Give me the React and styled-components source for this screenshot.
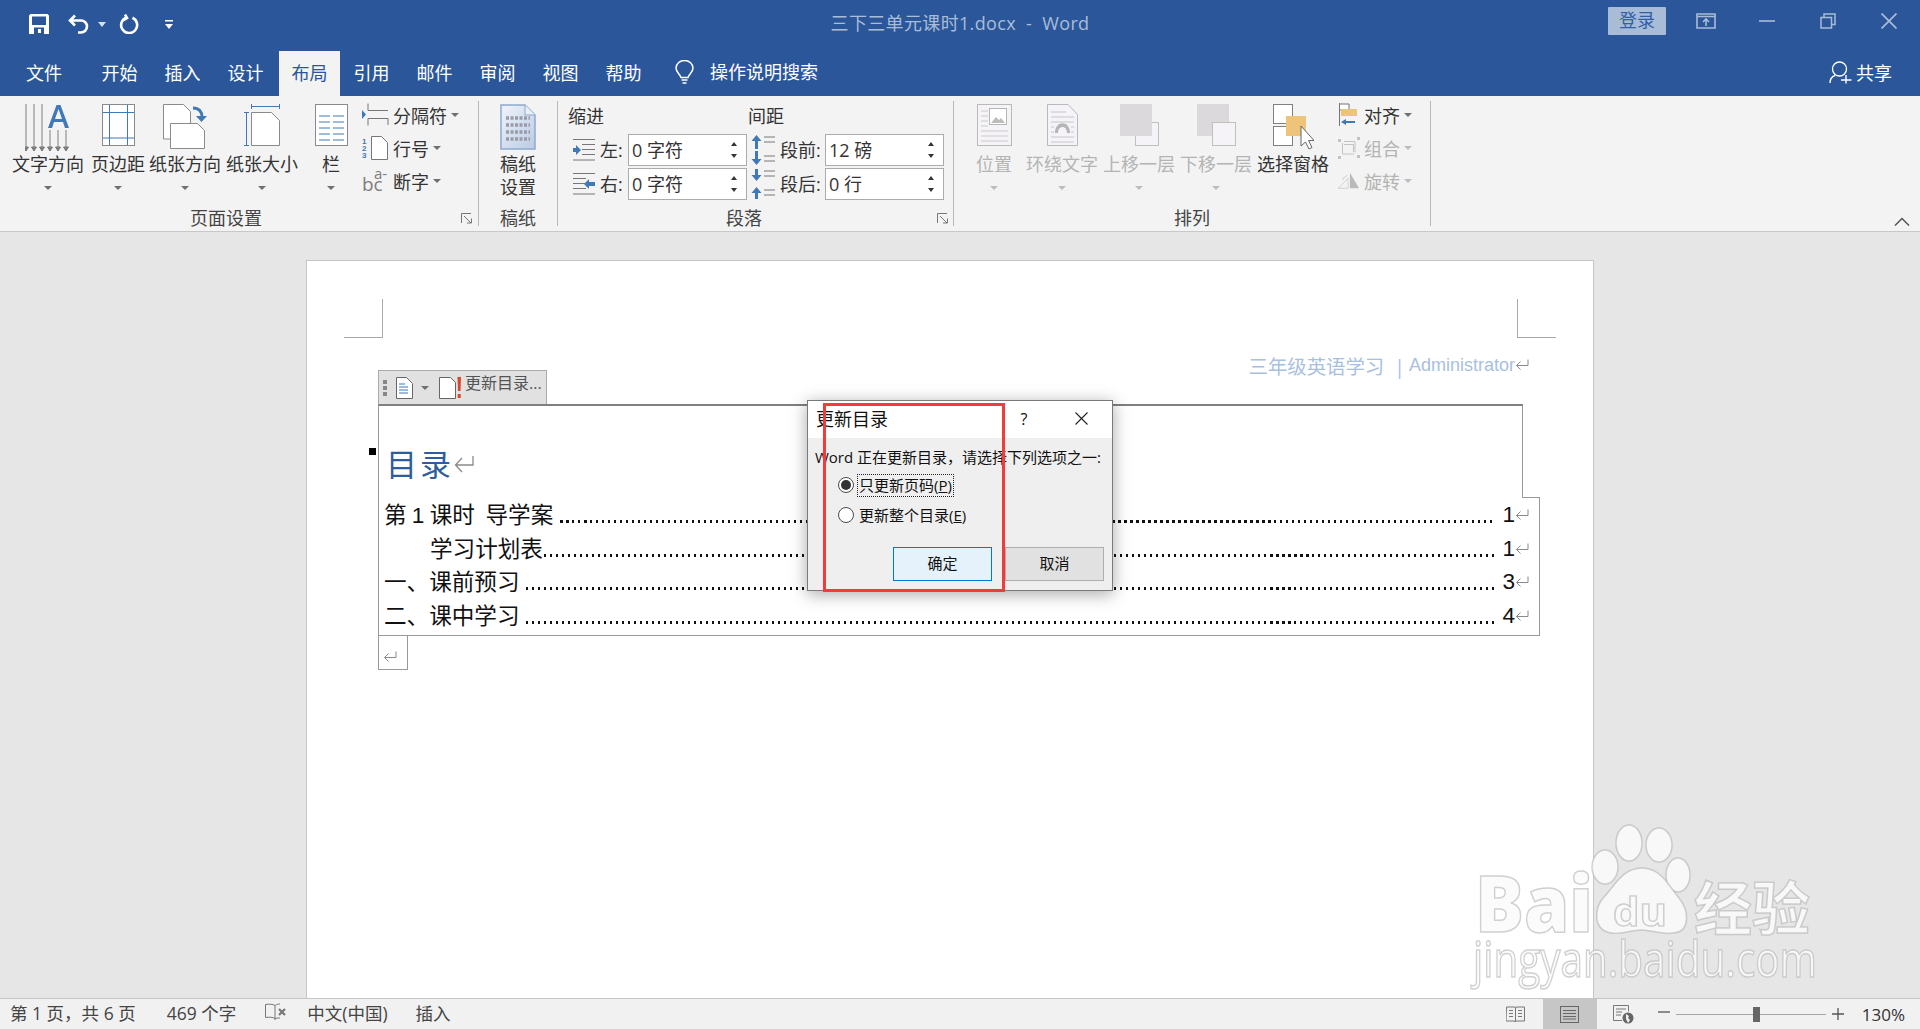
import styled, { createGlobalStyle } from "styled-components";

const UI_FONT = `"Open Sans", "Noto Sans CJK SC", sans-serif`;
const DOC_FONT = `"Liberation Sans", "Noto Sans CJK SC", sans-serif`;
const BLUE = "#4178b8";

const Global = createGlobalStyle`
  html, body { margin: 0; padding: 0; background: #e6e6e6; }
  * { box-sizing: border-box; }
`;

const Root = styled.div`
  position: relative;
  width: 100%;
  height: 100vh;
  overflow: hidden;
  display: flex;
  flex-direction: column;
  font-family: ${UI_FONT};
  font-size: 18px;
  color: #333;
`;

/* title bar */
const TitleBar = styled.div`
  height: 48px;
  flex: none;
  background: #2b579a;
  display: grid;
  grid-template-columns: 1fr auto 1fr;
  align-items: center;
`;
const Qat = styled.div`
  display: flex;
  align-items: center;
  padding-left: 29px;
`;
const QatItem = styled.span`
  display: flex;
  margin-left: ${(p) => p.$ml || 0}px;
`;
const DocTitle = styled.div`
  color: #a9bcd8;
  font-size: 18px;
  line-height: 24px;
  letter-spacing: 0.35px;
  white-space: pre;
  margin-top: -2px;
`;
const WinControls = styled.div`
  display: flex;
  align-items: center;
  justify-content: flex-end;
  padding-right: 1px;
`;
const SignIn = styled.div`
  width: 58px;
  height: 28px;
  margin-right: 9px;
  margin-top: -6px;
  background: #a9bcd7;
  border-radius: 1px;
  color: #2f5fa5;
  font-size: 18px;
  line-height: 27px;
  text-align: center;
`;
const WinBtn = styled.div`
  width: 61px;
  height: 42px;
  margin-top: -6px;
  display: flex;
  align-items: center;
  justify-content: center;
`;

/* tabs */
const TabBar = styled.div`
  height: 48px;
  flex: none;
  background: #2b579a;
  display: flex;
  align-items: flex-end;
`;
const Tab = styled.div`
  width: ${(p) => (p.$active ? 61 : p.$w || 63)}px;
  margin-left: ${(p) => (p.$active ? 2 : 0)}px;
  height: 45px;
  line-height: 44px;
  text-align: center;
  font-size: 18px;
  color: ${(p) => (p.$active ? "#2b579a" : "#fff")};
  background: ${(p) => (p.$active ? "#f3f3f3" : "transparent")};
`;
const SearchBox = styled.div`
  display: flex;
  align-items: center;
  gap: 16px;
  height: 48px;
  margin-left: 20px;
  color: #fff;
  font-size: 18px;
  line-height: 46px;
`;
const Share = styled.div`
  display: flex;
  align-items: center;
  gap: 4px;
  height: 48px;
  margin-left: auto;
  padding-right: 28px;
  color: #fff;
  font-size: 18px;
`;

/* ribbon */
const Ribbon = styled.div`
  height: 136px;
  flex: none;
  position: relative;
  background: #f3f3f3;
  border-bottom: 1px solid #c8c8c8;
  display: flex;
  align-items: flex-start;
`;
const Group = styled.div`
  position: relative;
  width: ${(p) => p.$w}px;
  height: 125px;
  margin-top: 5px;
  border-right: 1px solid #b9b9b9;
  display: flex;
  flex-direction: column;
`;
const GroupBody = styled.div`
  height: 104px;
  flex: none;
  padding: 3px 0 0 ${(p) => p.$pl || 0}px;
  display: flex;
  align-items: flex-start;
`;
const GroupLabel = styled.div`
  height: 21px;
  line-height: 26px;
  text-align: center;
  padding-right: ${(p) => p.$pr || 0}px;
  font-size: 18px;
  color: #444;
`;
const Launcher = styled.span`
  position: absolute;
  right: ${(p) => p.$right}px;
  bottom: 2px;
  display: flex;
`;
const LargeBtn = styled.div`
  width: ${(p) => p.$w}px;
  flex: none;
  display: flex;
  flex-direction: column;
  align-items: center;
  color: ${(p) => (p.$off ? "#b4b4b4" : "#333")};
`;
const IconSlot = styled.div`
  height: 49px;
  display: flex;
  align-items: flex-start;
  justify-content: center;
`;
const BtnLine = styled.div`
  height: 23px;
  line-height: 23px;
  font-size: 18px;
  white-space: nowrap;
  display: flex;
  align-items: center;
`;
const Caret = styled.span`
  width: 0;
  height: 0;
  flex: none;
  border-left: 4px solid transparent;
  border-right: 4px solid transparent;
  border-top: 4px solid ${(p) => (p.$off ? "#bdbdbd" : "#707070")};
`;
const SmallCol = styled.div`
  margin-left: ${(p) => p.$ml || 0}px;
  margin-top: -6px;
  display: flex;
  flex-direction: column;
`;
const SmallRow = styled.div`
  height: 33px;
  display: flex;
  align-items: center;
  font-size: 18px;
  color: ${(p) => (p.$off ? "#b4b4b4" : "#333")};
  white-space: nowrap;
`;
const SmallIcon = styled.span`
  width: ${(p) => p.$w}px;
  margin-right: 4px;
  display: flex;
  align-items: center;
  justify-content: center;
`;
const SmallCaret = styled(Caret)`
  margin-left: 4px;
`;
const ParaCol = styled.div`
  width: ${(p) => p.$w}px;
  flex: none;
  display: flex;
  flex-direction: column;
`;
const ParaHead = styled.div`
  height: 24px;
  line-height: 24px;
  margin-bottom: 6px;
  color: #333;
`;
const ParaRow = styled.div`
  height: 32px;
  margin-bottom: 2px;
  display: flex;
  align-items: center;
  white-space: nowrap;
`;
const ParaIcon = styled.span`
  width: ${(p) => p.$w}px;
  margin-left: ${(p) => p.$ml}px;
  display: flex;
`;
const ParaLabel = styled.span`
  width: ${(p) => p.$w}px;
  margin: -2px ${(p) => p.$mr}px 0 5px;
  color: #333;
`;
const SpinBox = styled.div`
  width: 119px;
  height: 32px;
  background: #fff;
  border: 1px solid #ababab;
  padding-left: 3px;
  display: flex;
  align-items: center;
  color: #333;
  line-height: 30px;
`;
const SpinArrows = styled.span`
  margin-left: auto;
  width: 24px;
  height: 100%;
  padding: 7px 0;
  display: flex;
  flex-direction: column;
  align-items: center;
  justify-content: space-between;
`;
const ArrowUp = styled.i`
  border-left: 3px solid transparent;
  border-right: 3px solid transparent;
  border-bottom: 4px solid #333;
`;
const ArrowDown = styled.i`
  border-left: 3px solid transparent;
  border-right: 3px solid transparent;
  border-top: 4px solid #333;
`;
const Collapse = styled.span`
  position: absolute;
  right: 10px;
  top: 121px;
  display: flex;
`;

/* document */
const Workspace = styled.div`
  flex: 1;
  min-height: 0;
  padding: 28px 0 0 306px;
  background: #e6e6e6;
  overflow: hidden;
`;
const Page = styled.div`
  width: 1288px;
  height: 900px;
  background: #fff;
  border: 1px solid #c6c6c6;
  padding-top: 38px;
`;
const CropRow = styled.div`
  display: flex;
  justify-content: space-between;
  margin: 0 37px;
`;
const CropMark = styled.div`
  width: 39px;
  height: 39px;
  border-bottom: 1px solid #a9a9a9;
  ${(p) => (p.$right ? "border-left" : "border-right")}: 1px solid #a9a9a9;
`;
const HeaderRow = styled.div`
  width: 1151px;
  height: 50px;
  margin: 16px 0 0 71px;
  display: flex;
  justify-content: space-between;
`;
const TocTab = styled.div`
  align-self: flex-end;
  width: 169px;
  height: 34px;
  background: #e1e1e1;
  border: 1px solid #aaa;
  border-bottom: none;
  display: flex;
  align-items: center;
  padding-left: 4px;
  color: #555;
  font-size: 16px;
  white-space: nowrap;
`;
const Grip = styled.span`
  width: 4px;
  height: 16px;
  margin-right: 9px;
  background: repeating-linear-gradient(#888 0 4px, transparent 4px 6px);
`;
const TabIcon = styled.span`
  display: flex;
  margin: 0 ${(p) => p.$mr || 0}px 0 ${(p) => p.$ml || 0}px;
`;
const TabText = styled.span`
  margin-top: -10px;
  line-height: 22px;
`;
const RunningHead = styled.div`
  display: flex;
  align-items: center;
  height: 22px;
  color: #a8c0e0;
  font-size: 19.4px;
  white-space: pre;
`;
const HeadLatin = styled.span`
  font-family: "Liberation Sans", sans-serif;
  font-size: 18px;
  margin-left: 4px;
`;
const TocWrap = styled.div`
  margin-left: 71px;
  width: 1162px;
  font-family: ${DOC_FONT};
  color: #111;
`;
const TocHead = styled.div`
  position: relative;
  width: 1145px;
  height: 94px;
  padding: 37px 0 0 7px;
  border-top: 2px solid #808080;
  border-left: 1px solid #999;
  border-right: 1px solid #999;
  display: flex;
  align-items: flex-start;
`;
const Anchor = styled.span`
  position: absolute;
  left: -10px;
  top: 42px;
  width: 7px;
  height: 7px;
  background: #000;
`;
const TocTitle = styled.span`
  color: #2e5d9a;
  font-size: 31px;
  line-height: 40px;
  letter-spacing: 3px;
  font-family: "Noto Sans CJK SC", sans-serif;
`;
const TitleReturn = styled.span`
  display: flex;
  margin-top: 12px;
`;
const TocBody = styled.div`
  position: relative;
  height: 138px;
  padding: 0 10px 0 5px;
  border-left: 1px solid #999;
  border-right: 1px solid #999;
  border-bottom: 1px solid #999;
  &::before {
    content: "";
    position: absolute;
    top: -1px;
    left: 1143px;
    width: 18px;
    border-top: 1px solid #999;
  }
`;
const TocLine = styled.div`
  height: 33.8px;
  display: flex;
  align-items: center;
  font-size: 22.6px;
  white-space: pre;
`;
const TocLabel = styled.span`
  padding-left: ${(p) => p.$indent || 0}px;
  margin-top: -3px;
  word-spacing: -1px;
`;
const Leader = styled.span`
  flex: 1;
  height: 3px;
  margin: 13px 6px 0 1px;
  background: repeating-linear-gradient(90deg, #111 0 2.5px, transparent 2.5px 6px);
`;
const TocTail = styled.div`
  width: 30px;
  height: 34px;
  padding: 11px 0 0 4px;
  border-left: 1px solid #999;
  border-right: 1px solid #999;
  border-bottom: 1px solid #999;
`;

/* dialog */
const Dialog = styled.div`
  position: absolute;
  left: 807px;
  top: 400px;
  width: 306px;
  height: 191px;
  background: #efefef;
  border: 1px solid #7a7a7a;
  box-shadow: 0 3px 16px rgba(0, 0, 0, 0.35);
  color: #111;
  font-size: 15px;
`;
const DialogTitle = styled.div`
  height: 37px;
  background: #fff;
  display: flex;
  align-items: center;
  padding: 0 0 2px 8px;
  font-size: 18px;
  line-height: 24px;
`;
const HelpMark = styled.span`
  margin-left: auto;
  width: 24px;
  text-align: center;
  font-size: 16px;
`;
const DialogClose = styled.span`
  width: 34px;
  margin: 0 14px 0 28px;
  display: flex;
  justify-content: center;
`;
const DialogMsg = styled.div`
  margin: 9px 0 3px 7px;
  line-height: 20px;
  white-space: nowrap;
`;
const RadioRow = styled.div`
  height: 30px;
  margin-left: 30px;
  display: flex;
  align-items: center;
`;
const RadioDot = styled.span`
  width: 16px;
  height: 16px;
  flex: none;
  border-radius: 50%;
  background: #fff;
  border: 1px solid #4a4a4a;
  display: flex;
  align-items: center;
  justify-content: center;
  &::after {
    content: "";
    width: 10px;
    height: 10px;
    border-radius: 50%;
    background: ${(p) => (p.$on ? "#333" : "transparent")};
  }
`;
const RadioLabel = styled.span`
  margin-left: 3px;
  height: 23px;
  line-height: 21px;
  padding: 0 1px;
  border: 1px dotted ${(p) => (p.$focus ? "#222" : "transparent")};
  white-space: nowrap;
`;
const DialogActions = styled.div`
  margin-top: 17px;
  padding-right: 8px;
  display: flex;
  justify-content: flex-end;
  gap: 13px;
`;
const DialogBtn = styled.div`
  width: 99px;
  height: 34px;
  line-height: 30px;
  text-align: center;
  font-size: 15px;
  background: ${(p) => (p.$primary ? "#e5f1fb" : "#e1e1e1")};
  border: 1px solid ${(p) => (p.$primary ? "#0078d7" : "#adadad")};
`;
const Highlight = styled.div`
  position: absolute;
  left: 823px;
  top: 403px;
  width: 182px;
  height: 189px;
  border: 3px solid #f33b3b;
`;

/* watermark */
const Watermark = styled.svg`
  position: absolute;
  left: 1465px;
  top: 820px;
  pointer-events: none;
  fill: rgba(250, 250, 250, 0.85);
  stroke: rgba(178, 178, 178, 0.6);
  stroke-width: 1.5px;
  filter: blur(0.5px);
`;

/* status bar */
const StatusBar = styled.div`
  height: 31px;
  flex: none;
  background: #f1f1f1;
  border-top: 1px solid #c6c6c6;
  display: flex;
  align-items: stretch;
  padding-left: 10px;
  color: #444;
  font-size: 17.5px;
`;
const StatusItem = styled.span`
  display: flex;
  align-items: center;
  margin: -4px 0 0 ${(p) => p.$ml || 0}px;
  white-space: pre;
`;
const StatusRight = styled.div`
  margin-left: auto;
  display: flex;
  align-items: center;
  padding-right: 15px;
`;
const ViewBtn = styled.span`
  width: 54px;
  align-self: stretch;
  display: flex;
  align-items: center;
  justify-content: center;
  background: ${(p) => (p.$active ? "#c6c6c6" : "transparent")};
`;
const ZoomSlider = styled.div`
  position: relative;
  width: 150px;
  height: 1px;
  margin: 0 6px;
  background: #a6a6a6;
`;
const ZoomThumb = styled.span`
  position: absolute;
  left: 77px;
  top: -7px;
  width: 7px;
  height: 15px;
  background: #666;
`;
const ZoomText = styled.span`
  margin-left: 18px;
  color: #333;
  font-size: 17px;
`;

/* icons */
const Svg = ({ w, h, children }) => (
  <svg width={w} height={h} viewBox={`0 0 ${w} ${h}`} fill="none">
    {children}
  </svg>
);

const SaveIcon = () => (
  <Svg w={20} h={20}>
    <path fillRule="evenodd" d="M0 1.500 1.500 0h17L20 1.500V20H0zM3 2.500v8.500h14V2.500zM5 13.500V20h10v-6.500zM9 15h3v4H9z" fill="#fff" />
  </Svg>
);
const UndoIcon = () => (
  <Svg w={23} h={20}>
    <path d="M3 6.500h11a6 6 0 0 1 0 12h-3M8 1.500 3 6.500l5 5" stroke="#fff" strokeWidth="2.600" />
  </Svg>
);
const RedoIcon = () => (
  <Svg w={20} h={20}>
    <path d="M7.500 3.500a8 8 0 1 0 6 .3M6 .5l2 3.500-3.500 2" stroke="#fff" strokeWidth="2.600" />
  </Svg>
);
const WhiteCaret = () => (
  <Svg w={8} h={5}>
    <path d="M0 0h8L4 5z" fill="#d5deec" />
  </Svg>
);
const CustomizeIcon = () => (
  <Svg w={8} h={9}>
    <path d="M0 0h8v1.500H0zM0 4h8L4 9z" fill="#fff" />
  </Svg>
);
const RibbonDisplayIcon = () => (
  <Svg w={20} h={16}>
    <path d="M1 1h18v14H1zM1 3.500h18M10 13V6.500M7 9l3-3 3 3" stroke="#a9bcd7" strokeWidth="1.600" />
  </Svg>
);
const MinIcon = () => (
  <Svg w={16} h={2}>
    <path d="M0 1h16" stroke="#a9bcd7" strokeWidth="1.600" />
  </Svg>
);
const RestoreIcon = () => (
  <Svg w={16} h={16}>
    <path d="M1 4.500h10.500V15H1zM4 4V1h11v10.500h-3.500" stroke="#a9bcd7" strokeWidth="1.500" />
  </Svg>
);
const CloseIcon = ({ size = 16, color = "#a9bcd7", sw = 1.7 }) => (
  <Svg w={size} h={size}>
    <path d={`M.5.5l${size - 1} ${size - 1}M${size - 0.5}.5l-${size - 1} ${size - 1}`} stroke={color} strokeWidth={sw} />
  </Svg>
);
const BulbIcon = () => (
  <Svg w={19} h={25}>
    <path d="M6 17.500C5 14 1 12.500 1 8a8.500 7.500 0 0 1 17 0c0 4.500-4 6-5 9.500zM6.500 20h6M7.500 23h4" stroke="#fff" strokeWidth="1.500" />
  </Svg>
);
const PersonPlusIcon = () => (
  <Svg w={23} h={23}>
    <circle cx="10.500" cy="8" r="7" stroke="#fff" strokeWidth="1.300" />
    <path d="M1 22c0-4 2-6.500 5-7.500M12 19h10.500M17 14v8.500" stroke="#fff" strokeWidth="1.400" />
  </Svg>
);
const TextDirIcon = () => (
  <Svg w={46} h={49}>
    {[1, 9, 17].map((x) => (
      <path key={x} d={`M${x} 0v47M${x - 2.5} 43l2.500 4 2.500-4z`} stroke="#7d7d7d" fill="#7d7d7d" strokeWidth="1" />
    ))}
    {[25, 33, 41].map((x) => (
      <path key={x} d={`M${x} 26v21M${x - 2.5} 43l2.500 4 2.500-4z`} stroke="#7d7d7d" fill="#7d7d7d" strokeWidth="1" />
    ))}
    <path d="M23 24 31.500 1h4L44 24h-4l-2-6h-9l-2 6zM30 15h7l-3.500-10z" fill={BLUE} fillRule="evenodd" />
  </Svg>
);
const MarginsIcon = () => (
  <Svg w={33} h={42}>
    <rect x=".5" y=".5" width="32" height="41" fill="#fff" stroke="#8a8a8a" />
    <path d="M7.500 1v40M25.500 1v40M1 8.500h31M1 34h31" stroke={BLUE} />
  </Svg>
);
const OrientIcon = () => (
  <Svg w={44} h={46}>
    <path d="M.5.500h20l7 7V35H.5z" fill="#fff" stroke="#8a8a8a" />
    <path d="M7.500 19.500h27l7 7v18h-34z" fill="#fff" stroke="#8a8a8a" />
    <path d="M30 4c6 0 9 4 9 9" stroke={BLUE} strokeWidth="3" />
    <path d="M33 12h11l-5.500 6z" fill={BLUE} />
  </Svg>
);
const SizeIcon = () => (
  <Svg w={36} h={42}>
    <path d="M7.500 8.500h20l8 8v25h-28z" fill="#fff" stroke="#8a8a8a" />
    <path d="M7.500 0v5M35.500 0v5M7.500 2.500h28M0 8.500h5M0 41.500h5M2.500 8.500v33" stroke={BLUE} />
  </Svg>
);
const ColumnsIcon = () => (
  <Svg w={33} h={42}>
    <rect x=".5" y=".5" width="32" height="41" fill="#fff" stroke="#8a8a8a" />
    {[12, 18, 24, 30, 36].map((y) => (
      <path key={y} d={`M4 ${y}h11M18 ${y}h11`} stroke={BLUE} />
    ))}
  </Svg>
);
const BreakIcon = () => (
  <Svg w={27} h={23}>
    <path d="M6 .5v7h20M6 22.500v-7h20V22" stroke="#777" />
    <path d="M0 7l4 4.500L0 16z" fill={BLUE} />
  </Svg>
);
const LineNumIcon = () => (
  <Svg w={27} h={24}>
    <text x="0" y="8" fontSize="8" fontWeight="700" fill={BLUE} fontFamily="Liberation Sans">1</text>
    <text x="0" y="15" fontSize="8" fontWeight="700" fill={BLUE} fontFamily="Liberation Sans">2</text>
    <text x="0" y="22" fontSize="8" fontWeight="700" fill={BLUE} fontFamily="Liberation Sans">3</text>
    <path d="M9.500.5h10l6 6v17h-16z" fill="#fff" stroke="#777" />
  </Svg>
);
const HyphenIcon = () => (
  <Svg w={27} h={33}>
    <text x="0" y="27" fontSize="19" fill="#7d7d7d" fontFamily="Open Sans">bc</text>
    <text x="12" y="15" fontSize="15" fill="#7d7d7d" fontFamily="Open Sans">a-</text>
  </Svg>
);
const ManuscriptIcon = () => (
  <Svg w={36} h={46}>
    <defs>
      <linearGradient id="ms" x1="0" y1="0" x2="1" y2="1">
        <stop offset="0" stopColor="#f0f4fa" />
        <stop offset="1" stopColor="#b9cbe4" />
      </linearGradient>
    </defs>
    <path d="M1 1h24l10 10v34H1z" fill="url(#ms)" stroke="#8fa9cf" strokeWidth="1.500" />
    <path d="M25 1v10h10" fill="#e9eff7" stroke="#8fa9cf" />
    {[14, 21, 28, 35].map((y) => (
      <path key={y} d={`M6 ${y}h24`} stroke="#9a9aa8" strokeWidth="3.500" strokeDasharray="3 1.500" />
    ))}
  </Svg>
);
const IndentIcon = ({ right }) => (
  <Svg w={22} h={22}>
    <path d={right ? "M0 .5h22M0 5.500h13M0 10.500h13M0 15.500h13M0 21h22" : "M0 .5h22M9 5.500h13M9 10.500h13M9 15.500h13M0 21h22"} stroke="#777" />
    {right ? (
      <path d="M22 9h-6V6l-5 5 5 5v-3h6z" fill={BLUE} />
    ) : (
      <path d="M0 9h3V6l5 5-5 5v-3H0z" fill={BLUE} />
    )}
  </Svg>
);
const SpacingIcon = ({ after }) => (
  <Svg w={24} h={30}>
    <path d="M13 2h11M13 7h11M13 21h11M13 26h11" stroke="#777" />
    {after ? (
      <path d="M4 0h3v6h3.500L5.500 12 .5 6H4zM4 30h3v-6h3.500L5.500 18 .5 24H4z" fill={BLUE} />
    ) : (
      <path d="M4 14h3V6h3.500L5.500 0 .5 6H4zM4 16h3v8h3.500L5.500 30 .5 24H4z" fill={BLUE} />
    )}
  </Svg>
);
const PositionIcon = () => (
  <Svg w={35} h={42}>
    <rect x=".5" y=".5" width="34" height="41" fill="#f5f3f7" stroke="#b9b9b9" />
    <path d="M4 7h7M4 12h7M4 17h7M4 22h7M4 27h27M4 32h27M4 37h27" stroke="#c9c9c9" />
    <rect x="12.500" y="4.500" width="17" height="16" fill="#fff" stroke="#b5b5b5" />
    <path d="M14 19l5-6 3 3 2-2 4 5z" fill="#bdbdbd" />
  </Svg>
);
const WrapIcon = () => (
  <Svg w={31} h={42}>
    <path d="M.5.500H21l9.500 10v31H.5z" fill="#f5f3f7" stroke="#b9b9b9" />
    <path d="M4 8h15M4 13h23M4 18h23M4 33h23M4 38h23M4 23h3M24 23h3M4 28h3M24 28h3" stroke="#c5c5c5" />
    <path d="M8 29c0-13 15-13 15 0h-3c0-8-9-8-9 0z" fill="#b5b5b5" />
  </Svg>
);
const LayerIcon = ({ up }) => (
  <Svg w={39} h={42}>
    {up ? (
      <>
        <rect x="15.500" y="18.500" width="23" height="23" fill="#f5f3f7" stroke="#c0c0c0" />
        <rect width="32" height="32" fill="#dcd9dc" />
      </>
    ) : (
      <>
        <rect width="32" height="32" fill="#dcd9dc" />
        <rect x="15.500" y="18.500" width="23" height="23" fill="#f5f3f7" stroke="#c0c0c0" />
      </>
    )}
  </Svg>
);
const SelectPaneIcon = () => (
  <Svg w={41} h={46}>
    <rect x=".5" y=".5" width="19" height="19" fill="#fff" stroke="#808080" />
    <rect x=".5" y="22.500" width="19" height="19" fill="#fff" stroke="#808080" />
    <rect x="13" y="12" width="20" height="20" fill="#edc47a" />
    <path d="M28 22v20l4.500-4 3.500 7 3-1.500-3.500-7H41z" fill="#fff" stroke="#666" />
  </Svg>
);
const AlignIcon = () => (
  <Svg w={20} h={23}>
    <path d="M.5 0v23M1 1h9v6H1" stroke="#777" fill="#fff" />
    <rect x="2" y="6" width="16" height="7" fill="#edc47a" />
    <path d="M16 18H7v-2l-5 3 5 3v-2h9z" fill={BLUE} />
  </Svg>
);
const GroupIcon = () => (
  <Svg w={22} h={22}>
    <path d="M6 4.500h11v11M4.500 6v11H16" stroke="#c3c3c3" />
    <path d="M6 7.500h9.500V15" stroke="#c3c3c3" />
    <path d="M0 2h3v3H0zM19 0h3v3h-3zM0 19h3v3H0zM19 18h3v3h-3z" fill="#c3c3c3" />
  </Svg>
);
const RotateIcon = () => (
  <Svg w={24} h={18}>
    <path d="M0 17h11L11 6z" stroke="#cfcfcf" />
    <path d="M13 0l10 17H13z" fill="#b9b9b9" />
    <path d="M5 8c1-3 3-4 5-5" stroke="#c3c3c3" />
  </Svg>
);
const LauncherIcon = () => (
  <Svg w={11} h={11}>
    <path d="M.5 10V.5H10M3 3l7 7M6 10h4.500V5.500" stroke="#777" />
  </Svg>
);
const ChevronUp = () => (
  <Svg w={16} h={9}>
    <path d="M1 8.500 8 1.500l7 7" stroke="#555" strokeWidth="1.500" />
  </Svg>
);
const ReturnMark = ({ big }) => (
  <Svg w={big ? 20 : 14} h={big ? 18 : 12}>
    {big ? (
      <path d="M19 1v9H2M8 3 1.500 10 8 17" stroke="#8a8a8a" strokeWidth="1.300" />
    ) : (
      <path d="M13 .5v6H1.500M5.500 2.500 1.500 6.500l4 4" stroke="#8a8a8a" />
    )}
  </Svg>
);
const TabDocIcon = () => (
  <Svg w={17} h={22}>
    <path d="M.5.500h10l6 6v15H.5z" fill="#fff" stroke="#666" />
    <path d="M3 7h6M3 10h9M3 13h9M3 16h9" stroke={BLUE} />
  </Svg>
);
const UpdateIcon = () => (
  <Svg w={23} h={22}>
    <path d="M.5.500h11l5 5v16H.5z" fill="#fff" stroke="#666" />
    <path d="M18.500 0h3.500l-.5 14h-2.500zM18.700 17h3v4h-3z" fill="#d9472b" />
  </Svg>
);
const ReadIcon = () => (
  <Svg w={19} h={17}>
    <path d="M.5 1h8.500l.5 1 .5-1h8.500v14h-9l-.5 1-.5-1h-8.500z" stroke="#777" />
    <path d="M9.500 2v13M3 4.500h4M3 7.500h4M3 10.500h4M12 4.500h4M12 7.500h4M12 10.500h4" stroke="#777" />
  </Svg>
);
const PrintIcon = () => (
  <Svg w={19} h={17}>
    <rect x=".5" y=".5" width="18" height="16" stroke="#666" />
    <path d="M3 4.500h13M3 7.500h13M3 10.500h13M3 13h13" stroke="#666" />
  </Svg>
);
const WebIcon = () => (
  <Svg w={21} h={19}>
    <path d="M9 15.500H.5V.5h15v6" stroke="#777" />
    <path d="M3 4h10M3 7h6M3 10h5" stroke="#777" />
    <circle cx="15" cy="13" r="5.500" fill="#666" />
    <path d="M13 9l3 2-1 2 2 2-2 3-2-4z" fill="#f1f1f1" />
  </Svg>
);
const ProofIcon = () => (
  <Svg w={21} h={18}>
    <path d="M10 2.500C8 1 4 1 .5 1.500v13C4 14 8 14 10 15.500M10 2.500c1.500-1 3-1.500 5-1.500M15 15c-2 0-3.500 0-5 .5M10 3v14" stroke="#777" />
    <path d="M14 6l6 6M20 6l-6 6" stroke="#777" strokeWidth="2.200" />
  </Svg>
);
const ZoomMinus = () => (
  <Svg w={12} h={2}>
    <path d="M0 1h12" stroke="#555" strokeWidth="1.300" />
  </Svg>
);
const ZoomPlus = () => (
  <Svg w={12} h={12}>
    <path d="M0 6h12M6 0v12" stroke="#555" strokeWidth="1.300" />
  </Svg>
);

const TOC = [
  { label: "第 1 课时  导学案 ", page: 1 },
  { label: "学习计划表", page: 1, indent: 46 },
  { label: "一、课前预习 ", page: 3 },
  { label: "二、课中学习 ", page: 4 },
];

const TABS = ["开始", "插入", "设计", "布局", "引用", "邮件", "审阅", "视图", "帮助"];

function Big({ w, icon, lines, off, caret = true }) {
  return (
    <LargeBtn $w={w} $off={off}>
      <IconSlot>{icon}</IconSlot>
      {lines.map((l) => (
        <BtnLine key={l}>{l}</BtnLine>
      ))}
      {caret && (
        <BtnLine>
          <Caret $off={off} />
        </BtnLine>
      )}
    </LargeBtn>
  );
}

function Small({ iw, icon, text, off }) {
  return (
    <SmallRow $off={off}>
      <SmallIcon $w={iw}>{icon}</SmallIcon>
      {text}
      <SmallCaret $off={off} />
    </SmallRow>
  );
}

function Spin({ value }) {
  return (
    <SpinBox>
      {value}
      <SpinArrows>
        <ArrowUp />
        <ArrowDown />
      </SpinArrows>
    </SpinBox>
  );
}

export default function App() {
  return (
    <Root>
      <Global />
      <TitleBar>
        <Qat>
          <QatItem><SaveIcon /></QatItem>
          <QatItem $ml={18}><UndoIcon /></QatItem>
          <QatItem $ml={8}><WhiteCaret /></QatItem>
          <QatItem $ml={13}><RedoIcon /></QatItem>
          <QatItem $ml={26}><CustomizeIcon /></QatItem>
        </Qat>
        <DocTitle>三下三单元课时1.docx  -  Word</DocTitle>
        <WinControls>
          <SignIn>登录</SignIn>
          <WinBtn><RibbonDisplayIcon /></WinBtn>
          <WinBtn><MinIcon /></WinBtn>
          <WinBtn><RestoreIcon /></WinBtn>
          <WinBtn><CloseIcon /></WinBtn>
        </WinControls>
      </TitleBar>

      <TabBar>
        <Tab $w={88}>文件</Tab>
        {TABS.map((t) => (
          <Tab key={t} $active={t === "布局"}>{t}</Tab>
        ))}
        <SearchBox>
          <BulbIcon />
          操作说明搜索
        </SearchBox>
        <Share>
          <PersonPlusIcon />
          共享
        </Share>
      </TabBar>

      <Ribbon>
        <Group $w={479}>
          <GroupBody $pl={10}>
            <Big w={76} icon={<TextDirIcon />} lines={["文字方向"]} />
            <Big w={64} icon={<MarginsIcon />} lines={["页边距"]} />
            <Big w={70} icon={<OrientIcon />} lines={["纸张方向"]} />
            <Big w={84} icon={<SizeIcon />} lines={["纸张大小"]} />
            <Big w={54} icon={<ColumnsIcon />} lines={["栏"]} />
            <SmallCol $ml={4}>
              <Small iw={27} icon={<BreakIcon />} text="分隔符" />
              <Small iw={27} icon={<LineNumIcon />} text="行号" />
              <Small iw={27} icon={<HyphenIcon />} text="断字" />
            </SmallCol>
          </GroupBody>
          <GroupLabel $pr={26}>页面设置</GroupLabel>
          <Launcher $right={6}><LauncherIcon /></Launcher>
        </Group>

        <Group $w={79}>
          <GroupBody>
            <Big w={78} icon={<ManuscriptIcon />} lines={["稿纸", "设置"]} caret={false} />
          </GroupBody>
          <GroupLabel>稿纸</GroupLabel>
        </Group>

        <Group $w={396}>
          <GroupBody $pl={10}>
            <ParaCol $w={180}>
              <ParaHead>缩进</ParaHead>
              <ParaRow>
                <ParaIcon $w={22} $ml={5}><IndentIcon /></ParaIcon>
                <ParaLabel $w={22} $mr={6}>左:</ParaLabel>
                <Spin value="0 字符" />
              </ParaRow>
              <ParaRow>
                <ParaIcon $w={22} $ml={5}><IndentIcon right /></ParaIcon>
                <ParaLabel $w={22} $mr={6}>右:</ParaLabel>
                <Spin value="0 字符" />
              </ParaRow>
            </ParaCol>
            <ParaCol $w={200}>
              <ParaHead>间距</ParaHead>
              <ParaRow>
                <ParaIcon $w={24} $ml={3}><SpacingIcon /></ParaIcon>
                <ParaLabel $w={40} $mr={5}>段前:</ParaLabel>
                <Spin value="12 磅" />
              </ParaRow>
              <ParaRow>
                <ParaIcon $w={24} $ml={3}><SpacingIcon after /></ParaIcon>
                <ParaLabel $w={40} $mr={5}>段后:</ParaLabel>
                <Spin value="0 行" />
              </ParaRow>
            </ParaCol>
          </GroupBody>
          <GroupLabel $pr={23}>段落</GroupLabel>
          <Launcher $right={5}><LauncherIcon /></Launcher>
        </Group>

        <Group $w={477}>
          <GroupBody $pl={6}>
            <Big w={68} off icon={<PositionIcon />} lines={["位置"]} />
            <Big w={68} off icon={<WrapIcon />} lines={["环绕文字"]} />
            <Big w={86} off icon={<LayerIcon up />} lines={["上移一层"]} />
            <Big w={68} off icon={<LayerIcon />} lines={["下移一层"]} />
            <Big w={86} icon={<SelectPaneIcon />} lines={["选择窗格"]} caret={false} />
            <SmallCol $ml={2}>
              <Small iw={22} icon={<AlignIcon />} text="对齐" />
              <Small iw={22} off icon={<GroupIcon />} text="组合" />
              <Small iw={22} off icon={<RotateIcon />} text="旋转" />
            </SmallCol>
          </GroupBody>
          <GroupLabel>排列</GroupLabel>
        </Group>
        <Collapse><ChevronUp /></Collapse>
      </Ribbon>

      <Workspace>
        <Page>
          <CropRow>
            <CropMark />
            <CropMark $right />
          </CropRow>
          <HeaderRow>
            <TocTab>
              <Grip />
              <TabIcon $mr={8}><TabDocIcon /></TabIcon>
              <Caret />
              <TabIcon $ml={10} $mr={3}><UpdateIcon /></TabIcon>
              <TabText>更新目录...</TabText>
            </TocTab>
            <RunningHead>
              三年级英语学习  |<HeadLatin>Administrator</HeadLatin>
              <ReturnMark />
            </RunningHead>
          </HeaderRow>
          <TocWrap>
            <TocHead>
              <Anchor />
              <TocTitle>目录</TocTitle>
              <TitleReturn><ReturnMark big /></TitleReturn>
            </TocHead>
            <TocBody>
              {TOC.map((row) => (
                <TocLine key={row.label}>
                  <TocLabel $indent={row.indent}>{row.label}</TocLabel>
                  <Leader />
                  {row.page}
                  <ReturnMark />
                </TocLine>
              ))}
            </TocBody>
            <TocTail>
              <ReturnMark />
            </TocTail>
          </TocWrap>
        </Page>
      </Workspace>

      <StatusBar>
        <StatusItem>第 1 页，共 6 页</StatusItem>
        <StatusItem $ml={31}>469 个字</StatusItem>
        <StatusItem $ml={29}><ProofIcon /></StatusItem>
        <StatusItem $ml={21}>中文(中国)</StatusItem>
        <StatusItem $ml={28}>插入</StatusItem>
        <StatusRight>
          <ViewBtn><ReadIcon /></ViewBtn>
          <ViewBtn $active><PrintIcon /></ViewBtn>
          <ViewBtn><WebIcon /></ViewBtn>
          <StatusItem $ml={7}><ZoomMinus /></StatusItem>
          <ZoomSlider><ZoomThumb /></ZoomSlider>
          <ZoomPlus />
          <ZoomText>130%</ZoomText>
        </StatusRight>
      </StatusBar>

      <Dialog>
        <DialogTitle>
          更新目录
          <HelpMark>?</HelpMark>
          <DialogClose><CloseIcon size={13} color="#222" sw={1.1} /></DialogClose>
        </DialogTitle>
        <DialogMsg>Word 正在更新目录，请选择下列选项之一:</DialogMsg>
        <RadioRow>
          <RadioDot $on />
          <RadioLabel $focus>只更新页码(<u>P</u>)</RadioLabel>
        </RadioRow>
        <RadioRow>
          <RadioDot />
          <RadioLabel>更新整个目录(<u>E</u>)</RadioLabel>
        </RadioRow>
        <DialogActions>
          <DialogBtn $primary>确定</DialogBtn>
          <DialogBtn>取消</DialogBtn>
        </DialogActions>
      </Dialog>
      <Highlight />

      <Watermark width="455" height="175" viewBox="0 0 455 175">
        <text x="10" y="112" fontFamily="Open Sans" fontWeight="800" fontSize="78" textLength="118" lengthAdjust="spacingAndGlyphs">Bai</text>
        <ellipse cx="164" cy="23" rx="13" ry="18" />
        <ellipse cx="194" cy="25" rx="13" ry="17" />
        <ellipse cx="140" cy="47" rx="13" ry="17" />
        <ellipse cx="213" cy="55" rx="12" ry="17" />
        <path d="M177 48C196 48 204 66 214 78C224 90 226 112 208 113C196 115 186 110 177 110C166 110 156 115 146 113C128 110 128 88 140 76C150 65 158 48 177 48Z" />
        <text x="148" y="106" fontFamily="Open Sans" fontWeight="700" fontSize="40" textLength="54" lengthAdjust="spacingAndGlyphs">du</text>
        <text x="229" y="110" fontFamily="Noto Sans CJK SC" fontWeight="700" fontSize="58">经验</text>
        <text x="8" y="157" fontFamily="Open Sans" fontSize="50" textLength="344" lengthAdjust="spacingAndGlyphs">jingyan.baidu.com</text>
      </Watermark>
    </Root>
  );
}
